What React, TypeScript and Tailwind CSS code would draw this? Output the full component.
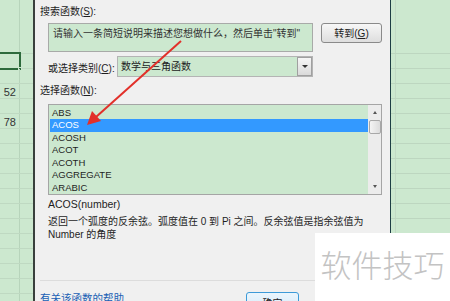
import React from "react";

const rows = Array.from({ length: 17 });

function LeftSheet() {
  return (
    <div className="w-[33px] h-full bg-[#cce8cf] flex flex-col shrink-0 overflow-hidden">
      <div className="h-[53px] shrink-0 flex">
        <div className="w-[20px] border-r border-[#b7d4bb]" />
        <div className="flex-1" />
      </div>
      {rows.map((_, i) => (
        <div key={i} className="h-[15px] shrink-0 flex border-t border-[#bfd9c2]">
          <div className="w-[20px] border-r border-[#b7d4bb] relative flex items-center justify-end pr-[3px] pt-[2px] text-[11px] text-[#333] leading-none">
            {i === 0 && (
              <div className="absolute -top-[2px] -left-[2px] -right-[2px] -bottom-[2px] border-2 border-[#2d6a3c]">
                <div className="absolute -right-[3px] -bottom-[3px] w-[4px] h-[4px] bg-[#2d6a3c] border border-[#cce8cf]" />
              </div>
            )}
            {i === 2 && "52"}
            {i === 4 && "78"}
          </div>
          <div className="flex-1" />
        </div>
      ))}
    </div>
  );
}

function RightSheet() {
  return (
    <div className="flex-1 h-full bg-[#cce8cf] flex flex-col overflow-hidden">
      <div className="h-[53px] shrink-0 flex">
        <div className="w-[5px] border-r border-[#c2d9c5]" />
        <div className="flex-1" />
      </div>
      {rows.map((_, i) => (
        <div key={i} className="h-[15px] shrink-0 flex border-t border-[#bdd6c0]">
          <div className="w-[5px] border-r border-[#c2d9c5]" />
          <div className="flex-1" />
        </div>
      ))}
    </div>
  );
}

const items = ["ABS", "ACOS", "ACOSH", "ACOT", "ACOTH", "AGGREGATE", "ARABIC"];

function Dialog() {
  return (
    <div className="w-[355px] h-full bg-[#f0f0f0] flex flex-col text-[10px] text-[#1e1e1e] shrink-0 overflow-hidden">
      <div className="h-[23px] shrink-0 pl-[5px] flex items-center">
        搜索函数(<span className="underline">S</span>):
      </div>
      <div className="h-[33px] shrink-0 flex items-start pl-[13px]">
        <div className="w-[265px] h-[29px] border border-[#a8aaa8] bg-[#cce8cf] pl-[4px] pt-[4px] leading-[12px] text-[#333] whitespace-nowrap overflow-hidden">
          请输入一条简短说明来描述您想做什么，然后单击"转到"
        </div>
        <div className="ml-[8px] w-[61px] h-[20px] border border-[#8a8a8a] rounded-[3px] bg-gradient-to-b from-[#f7f7f7] to-[#dedede] flex items-center justify-center text-[#222]">
          转到(<span className="underline">G</span>)
        </div>
      </div>
      <div className="h-[21px] shrink-0 flex items-center pl-[13px]">
        <div className="w-[69px] pt-[3px]">
          或选择类别(<span className="underline">C</span>):
        </div>
        <div className="w-[196px] h-[21px] border border-[#b4b4b4] bg-[#cce8cf] flex items-center justify-between">
          <span className="pl-[3px] text-[#222]">数学与三角函数</span>
          <div className="w-[15px] h-[19px] border border-[#a0a0a0] bg-gradient-to-b from-[#f6f6f6] to-[#dadada] flex items-center justify-center">
            <div className="w-0 h-0 border-l-[3px] border-r-[3px] border-t-[3px] border-l-transparent border-r-transparent border-t-[#333]" />
          </div>
        </div>
      </div>
      <div className="h-[27px] shrink-0 pl-[5px] flex items-center">
        选择函数(<span className="underline">N</span>):
      </div>
      <div className="ml-[13px] w-[334px] h-[91px] shrink-0 border border-[#a5a5a5] bg-[#cce8cf] flex overflow-hidden">
        <div className="flex-1 pl-[1px] pt-[1.5px] flex flex-col text-[9.5px] overflow-hidden">
          {items.map((it) => (
            <div
              key={it}
              className={
                it === "ACOS"
                  ? "h-[12.5px] shrink-0 pl-[2px] leading-[12.5px] bg-[#3399ff] text-white"
                  : "h-[12.5px] shrink-0 pl-[2px] leading-[12.5px] text-[#1e1e1e]"
              }
            >
              {it}
            </div>
          ))}
        </div>
        <div className="w-[13px] h-full bg-[#ececec] flex flex-col items-center">
          <div className="h-[15px] w-full flex items-center justify-center">
            <div className="w-0 h-0 border-l-[2.5px] border-r-[2.5px] border-b-[3px] border-l-transparent border-r-transparent border-b-[#555]" />
          </div>
          <div className="w-[12px] h-[14px] border border-[#a8a8a8] rounded-[2px] bg-gradient-to-r from-[#f4f4f4] to-[#dcdcdc]" />
          <div className="flex-1" />
          <div className="h-[15px] w-full flex items-center justify-center">
            <div className="w-0 h-0 border-l-[2.5px] border-r-[2.5px] border-t-[3px] border-l-transparent border-r-transparent border-t-[#555]" />
          </div>
        </div>
      </div>
      <div className="h-[20px] shrink-0 pl-[13px] flex items-center text-[10.5px] text-[#1e1e1e]">
        ACOS(number)
      </div>
      <div className="h-[26px] shrink-0 pl-[13px] leading-[13px] text-[#1e1e1e] whitespace-nowrap">
        返回一个弧度的反余弦。弧度值在 0 到 Pi 之间。反余弦值是指余弦值为
        <br />
        Number 的角度
      </div>
      <div className="h-[39px] shrink-0" />
      <div className="h-px shrink-0 ml-[5px] bg-[#dcdcdc]" />
      <div className="flex-1 flex items-start pl-[5px]">
        <div className="pt-[11px] text-[#1a5fb4] text-[10.5px] leading-[12px] whitespace-nowrap">有关该函数的帮助</div>
        <div className="ml-[122px] mt-[11px] w-[53px] h-[22px] border border-[#3c9ad8] rounded-[3px] bg-gradient-to-b from-[#eaf5fd] to-[#d4eaf8] flex justify-center pt-[3px] text-[#222]">
          确定
        </div>
      </div>
    </div>
  );
}

export default function App() {
  return (
    <div className="w-[450px] h-[301px] relative overflow-hidden flex font-['Liberation_Sans','Noto_Sans_CJK_SC',sans-serif]">
      <LeftSheet />
      <div className="w-[2px] h-full bg-[#39403d] shrink-0" />
      <Dialog />
      <div className="w-px h-full bg-[#1d3d44] shrink-0" />
      <RightSheet />
      <svg className="absolute left-0 top-0 pointer-events-none" width="450" height="301">
        <line x1="181" y1="41" x2="96" y2="117" stroke="#e2302a" strokeWidth="2" />
        <polygon points="87,125 92,111 101,121" fill="#e2302a" />
      </svg>
      <div className="absolute left-[315px] top-[233px] w-[135px] h-[68px] bg-white flex items-start justify-center pt-[14px]">
        <span className="text-[31px] leading-[34px] text-[#c3c3c3] font-light tracking-[0px] font-['Noto_Sans_CJK_SC',sans-serif]">
          软件技巧
        </span>
      </div>
    </div>
  );
}
